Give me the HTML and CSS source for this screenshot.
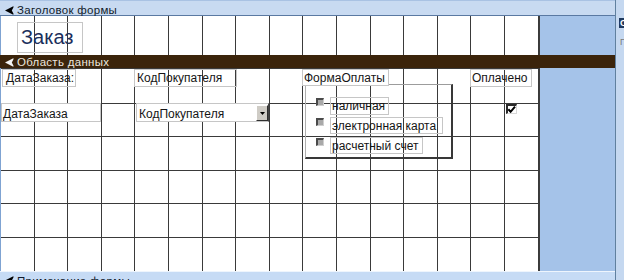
FILE: index.html
```html
<!DOCTYPE html>
<html lang="ru">
<head>
<meta charset="utf-8">
<title>Заказ — конструктор формы</title>
<link rel="stylesheet" href="styles.css">
</head>
<body>
<div class="app">
  <div class="designer">
    <div class="bar bar-header">
      <svg class="sel" width="9" height="9" viewBox="0 0 9 9"><path d="M0 4.5 L7.8 0.4 Q9 0.2 8.4 1.4 L6.8 4.5 L8.4 7.6 Q9 8.8 7.8 8.6 Z" fill="#000"/></svg>
      <span>Заголовок формы</span>
    </div>
    <div class="section section-header">
      <div class="canvas canvas-header">
        <div class="ctl title">Заказ</div>
      </div>
      <div class="fill"></div>
    </div>
    <div class="bar bar-detail">
      <svg class="sel" width="9" height="9" viewBox="0 0 9 9"><path d="M0 4.5 L7.8 0.4 Q9 0.2 8.4 1.4 L6.8 4.5 L8.4 7.6 Q9 8.8 7.8 8.6 Z" fill="#f4f4f4"/></svg>
      <span>Область данных</span>
    </div>
    <div class="section section-detail">
      <div class="canvas canvas-detail">
        <div class="ctl lbl lbl-date">ДатаЗаказа:</div>
        <div class="ctl lbl lbl-cust">КодПокупателя</div>
        <div class="ctl lbl lbl-paid">Оплачено</div>
        <div class="ctl field txt-date">ДатаЗаказа</div>
        <div class="ctl field combo"><span class="combo-text">КодПокупателя</span><span class="combo-btn"><svg width="5" height="3" viewBox="0 0 5 3"><path d="M0 0 H5 L2.5 3 Z" fill="#000"/></svg></span></div>
        <div class="group"></div>
        <div class="ctl lbl lbl-pay">ФормаОплаты</div>
        <div class="radio r1"></div>
        <div class="radio r2"></div>
        <div class="radio r3"></div>
        <div class="ctl lbl opt o1">наличная</div>
        <div class="ctl lbl opt o2">электронная карта</div>
        <div class="ctl lbl opt o3">расчетный счет</div>
        <div class="check"><svg width="9" height="9" viewBox="0 0 9 9"><path d="M1.3 4.3 L3.6 6.8 L8 1.6" fill="none" stroke="#000" stroke-width="2"/></svg></div>
      </div>
      <div class="fill"></div>
    </div>
    <div class="bar bar-footer">
      <svg class="sel" width="9" height="9" viewBox="0 0 9 9"><path d="M0 4.5 L7.8 0.4 Q9 0.2 8.4 1.4 L6.8 4.5 L8.4 7.6 Q9 8.8 7.8 8.6 Z" fill="#000"/></svg>
      <span>Примечание формы</span>
    </div>
  </div>
  <div class="side">
    <div class="side-title">О</div>
    <div class="side-text">П</div>
  </div>
</div>
</body>
</html>
```

FILE: styles.css
```css
html, body {
  margin: 0;
  padding: 0;
}
body {
  width: 624px;
  height: 280px;
  overflow: hidden;
  font-family: "Liberation Sans", Arial, sans-serif;
  background: #a5c3e9;
}
.app {
  display: flex;
  width: 624px;
  height: 280px;
}
.designer {
  flex: 0 0 615px;
  display: flex;
  flex-direction: column;
  overflow: hidden;
}
.bar {
  box-sizing: border-box;
  display: flex;
  align-items: flex-start;
  gap: 3px;
  padding-left: 5px;
  font-size: 11.5px;
  letter-spacing: 0.3px;
  line-height: 11px;
  white-space: nowrap;
  flex: 0 0 auto;
}
.bar .sel {
  flex: 0 0 auto;
}
.bar-header {
  height: 16px;
  padding-top: 5px;
  background: #c8daf1;
  border-top: 1px solid #a9c2e3;
  border-bottom: 1px solid #5a79a2;
  color: #111a2a;
}
.bar-header .sel { margin-top: 0; }
.bar-header span { margin-top: -1px; }
.bar-detail {
  height: 13px;
  padding-top: 3px;
  background: #3b240b;
  color: #ece6df;
}
.bar-detail .sel { margin-top: 0; }
.bar-detail span { margin-top: -1px; }
.bar-footer {
  height: 20px;
  padding-top: 4px;
  background: #c6dbf5;
  border-top: 1px solid #eef5fd;
  color: #111a2a;
}
.bar-footer .sel { margin-top: 0; }

.section {
  display: flex;
  flex: 0 0 auto;
}
.section-header { height: 39px; }
.section-detail { height: 203px; }
.fill {
  flex: 1;
  background: #a5c3e9;
}
.canvas {
  position: relative;
  box-sizing: border-box;
  width: 540px;
  border-left: 1px solid #7fa3d2;
  border-right: 1px solid #3c3c3c;
  background-color: #fff;
}
.canvas-header {
  background-image: repeating-linear-gradient(90deg, transparent 0 32.6px, #3a3a3a 32.6px 33.6px);
}
.canvas-detail {
  background-image:
    repeating-linear-gradient(90deg, transparent 0 32.6px, #3a3a3a 32.6px 33.6px),
    repeating-linear-gradient(180deg, transparent 0 32.6px, #3a3a3a 32.6px 33.6px);
  background-position: 0 0, 0 2px;
}

.ctl {
  position: absolute;
  box-sizing: border-box;
  border: 1px solid #c6c6c6;
  font-size: 12px;
  line-height: 16px;
  color: #151515;
  white-space: nowrap;
  overflow: hidden;
}
.title {
  left: 16px;
  top: 6px;
  width: 66px;
  height: 31px;
  padding-left: 3px;
  font-size: 20px;
  line-height: 29px;
  color: #1b2f5c;
}
.lbl-date { left: 1px; top: 1px; width: 74px; height: 18px; padding-left: 3px; }
.lbl-cust { left: 133px; top: 1px; width: 103px; height: 18px; padding-left: 2px; }
.lbl-pay { left: 301px; top: 1px; width: 87px; height: 17px; padding-left: 1px; background: #fff; }
.lbl-paid { left: 469px; top: 1px; width: 62px; height: 18px; padding-left: 1px; }
.field {
  background: #fff;
  height: 19px;
  padding-top: 2px;
}
.txt-date { left: 0; top: 35px; width: 100px; padding-left: 1px; }
.combo {
  left: 135px;
  top: 35px;
  width: 133px;
  display: flex;
  padding-top: 0;
  border-right: 1px solid #444;
}
.combo-text {
  flex: 1;
  padding: 2px 0 0 2px;
}
.combo-btn {
  box-sizing: border-box;
  width: 12px;
  height: 16px;
  margin-top: 1px;
  background: #cfccc6;
  border-top: 1px solid #fff;
  border-left: 1px solid #fff;
  border-right: 1px solid #303030;
  border-bottom: 1px solid #303030;
  display: flex;
  align-items: center;
  justify-content: center;
}
.group {
  position: absolute;
  box-sizing: border-box;
  left: 304px;
  top: 16px;
  width: 148px;
  height: 75px;
  border-top: 1px solid #9c9c9c;
  border-left: 1px solid #b0b0b0;
  border-right: 2px solid #383838;
  border-bottom: 2px solid #383838;
}
.radio {
  position: absolute;
  box-sizing: border-box;
  left: 315px;
  width: 8px;
  height: 8px;
  border-top: 2px solid #4a4a4a;
  border-left: 2px solid #4a4a4a;
  border-right: 1px solid #cfcfcf;
  border-bottom: 1px solid #cfcfcf;
  background: #a9a9a9;
}
.r1 { top: 30px; }
.r2 { top: 50px; }
.r3 { top: 70px; }
.opt { padding-left: 1px; height: 18px; }
.o1 { left: 329px; top: 29px; width: 59px; }
.o2 { left: 329px; top: 49px; width: 113px; height: 17px; }
.o3 { left: 329px; top: 69px; width: 93px; height: 17px; }
.check {
  position: absolute;
  box-sizing: border-box;
  left: 505px;
  top: 36px;
  width: 11px;
  height: 10px;
  background: #fff;
  border-top: 2px solid #2a2a2a;
  border-left: 2px solid #2a2a2a;
  border-right: 1px solid #d8d8d8;
  border-bottom: 1px solid #d8d8d8;
  display: flex;
}
.check svg { display: block; margin: -1px 0 0 -1px; }

.side {
  flex: 1;
  box-sizing: border-box;
  border-left: 1px solid #60809f;
  background: #c5d8f0;
  overflow: hidden;
  display: flex;
  flex-direction: column;
}
.side-title {
  margin: 18px 0 0 3px;
  height: 10px;
  width: 12px;
  background: #1f3a5f;
  color: #fff;
  font-size: 9px;
  font-weight: bold;
  line-height: 10px;
  padding-left: 1px;
  overflow: hidden;
}
.side-text {
  margin: 9px 0 0 4px;
  font-size: 9px;
  line-height: 10px;
  color: #7a7a7a;
}
```
